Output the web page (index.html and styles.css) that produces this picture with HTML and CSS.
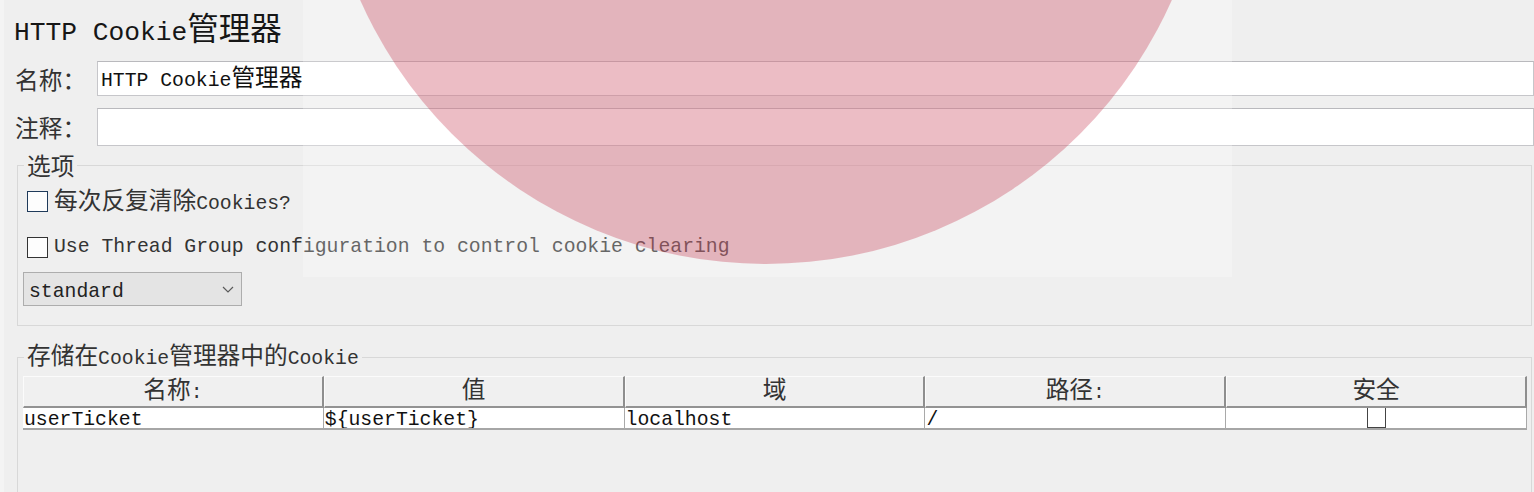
FILE: index.html
```html
<!DOCTYPE html>
<html lang="zh-CN">
<head>
<meta charset="utf-8">
<title>HTTP Cookie管理器</title>
<link rel="stylesheet" href="styles.css">
</head>
<body>
<div class="page">
  <h1 class="title">HTTP Cookie<span class="zh">管理器</span></h1>

  <div class="row">
    <label class="lbl zh">名称：</label>
    <div class="field name">HTTP Cookie<span class="zh">管理器</span></div>
  </div>
  <div class="row row2">
    <label class="lbl zh">注释：</label>
    <div class="field comment"></div>
  </div>

  <fieldset class="group options">
    <legend class="zh">选项</legend>
    <div class="check first">
      <span class="box focus"></span>
      <span class="ctext"><span class="zh">每次反复清除</span>Cookies?</span>
    </div>
    <div class="check second">
      <span class="box"></span>
      <span class="ctext">Use Thread Group configuration to control cookie clearing</span>
    </div>
    <div class="select">
      <span class="sel-text">standard</span>
      <svg class="chev" width="12" height="7" viewBox="0 0 12 7"><path d="M1 1 L6 6 L11 1" fill="none" stroke="#5a5a5a" stroke-width="1.2"/></svg>
    </div>
  </fieldset>

  <fieldset class="group cookies">
    <legend><span class="zh">存储在</span>Cookie<span class="zh">管理器中的</span>Cookie</legend>
    <div class="table">
      <div class="th"><span class="zh">名称</span>:</div>
      <div class="th"><span class="zh">值</span></div>
      <div class="th"><span class="zh">域</span></div>
      <div class="th"><span class="zh">路径</span>:</div>
      <div class="th"><span class="zh">安全</span></div>
      <div class="td">userTicket</div>
      <div class="td">${userTicket}</div>
      <div class="td">localhost</div>
      <div class="td">/</div>
      <div class="td center"><span class="cell-box"></span></div>
    </div>
  </fieldset>

  <div class="overlay-rect"></div>
  <div class="overlay-circle"></div>
</div>
</body>
</html>
```

FILE: styles.css
```css
html, body {
  margin: 0;
  padding: 0;
  background: #efefef;
}

body {
  font-family: "Liberation Mono", "Noto Sans CJK SC", monospace;
  font-size: 19.75px;
  color: #1c1c1c;
}

.zh {
  font-family: "Noto Sans CJK SC", sans-serif;
  font-size: 1.2em;
  line-height: 1;
}

.page {
  position: relative;
  width: 1534px;
  height: 492px;
  overflow: hidden;
  box-sizing: border-box;
  border-left: 4px solid #f4f4f4;
  background: #efefef;
}

.title {
  margin: 0;
  padding: 11px 0 0 10px;
  height: 43px;
  box-sizing: content-box;
  font-size: 26.25px;
  font-weight: normal;
  line-height: 43px;
  color: #161616;
}

.row {
  display: flex;
  align-items: center;
  margin-top: 7px;
}

.row2 {
  margin-top: 12px;
}

.lbl {
  flex: 0 0 93px;
  box-sizing: border-box;
  padding-left: 11px;
  color: #333;
  font-size: 23.7px;
  line-height: 30px;
}

.field {
  flex: 1;
  box-sizing: border-box;
  height: 35px;
  background: #fff;
  border: 1px solid #c6c6ca;
  border-top-color: #b9b9bd;
  padding: 3px 0 0 3px;
  line-height: 30px;
  white-space: nowrap;
  color: #111;
}

.field.comment {
  height: 38px;
}

.group {
  margin: 7px 2px 0 13px;
  border: 1px solid #d8d8d8;
  padding: 0 4px 19px 5px;
  min-width: 0;
}

.group legend {
  margin-left: 1px;
  padding: 0 3px;
  line-height: 24px;
  color: #333;
}

legend.zh {
  font-size: 23.7px;
  line-height: 24px;
}

.options .check {
  display: flex;
  align-items: center;
  gap: 6px;
  height: 24px;
  margin-left: 4px;
  white-space: nowrap;
  color: #333;
}

.options .first {
  margin-top: 12px;
}

.options .second {
  margin-top: 22px;
}

.box {
  flex: 0 0 auto;
  width: 21px;
  height: 21px;
  box-sizing: border-box;
  border: 1.5px solid #333;
  background: #fdfdfd;
}

.box.focus {
  border-color: #1f3a5a;
}

.select {
  margin-top: 13px;
  width: 219px;
  height: 34px;
  box-sizing: border-box;
  background: #e4e4e4;
  border: 1px solid #adadad;
  display: flex;
  align-items: center;
  justify-content: space-between;
  padding: 0 7px 0 5px;
  color: #222;
}

.sel-text {
  padding-top: 5px;
}

.chev {
  margin-top: 1px;
}

.cookies {
  margin-top: 17px;
  border-bottom: none;
  padding-bottom: 120px;
}

.table {
  margin-top: 5px;
  display: grid;
  grid-template-columns: repeat(5, 1fr);
}

.th {
  height: 32px;
  box-sizing: border-box;
  background: #f0f0f0;
  border-top: 1px solid #fbfbfb;
  border-left: 1px solid #fbfbfb;
  border-right: 2px solid #8e8e8e;
  border-bottom: 2px solid #939393;
  text-align: center;
  line-height: 29px;
  color: #333;
  white-space: nowrap;
}

.td {
  height: 22px;
  box-sizing: border-box;
  background: #fff;
  border-right: 1px solid #a9a9a9;
  border-bottom: 2px solid #a6a6a6;
  padding: 2px 0 0 1px;
  line-height: 20px;
  white-space: nowrap;
  overflow: hidden;
  color: #111;
}

.td.center {
  display: flex;
  justify-content: center;
  padding: 0;
}

.cell-box {
  width: 19px;
  height: 20px;
  box-sizing: border-box;
  border: 1.5px solid #444;
  border-top: none;
  background: #fff;
}

.overlay-rect {
  position: absolute;
  left: 299px;
  top: 0;
  width: 929px;
  height: 277px;
  background: rgba(255, 255, 255, 0.25);
  pointer-events: none;
}

.overlay-circle {
  position: absolute;
  left: 318px;
  top: -624px;
  width: 888px;
  height: 888px;
  border-radius: 50%;
  background: rgba(192, 38, 62, 0.3);
  pointer-events: none;
}
```
